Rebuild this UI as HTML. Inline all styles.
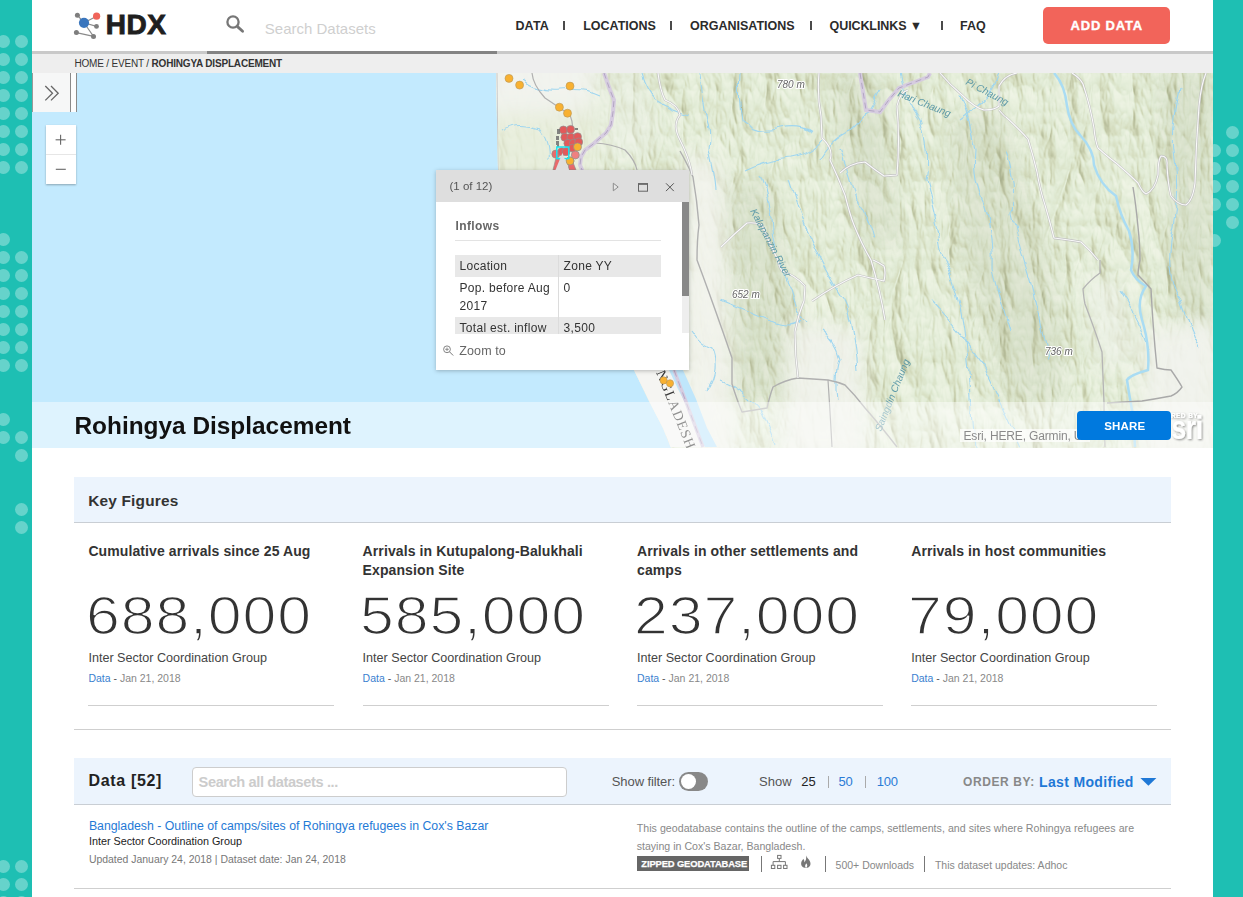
<!DOCTYPE html>
<html><head><meta charset="utf-8"><style>
html,body{margin:0;padding:0}
body{width:1243px;height:897px;overflow:hidden;position:relative;background:#1ebfb3;font-family:"Liberation Sans", sans-serif}
.d i{position:absolute;width:13px;height:13px;border-radius:50%;background:rgba(255,255,255,0.32)}
.r{position:absolute}
.t{position:absolute;white-space:nowrap}
svg{display:block}
</style></head><body>
<div class="d"><i style="left:-2.9px;top:35.3px"></i><i style="left:15.1px;top:35.3px"></i><i style="left:-2.9px;top:53.3px"></i><i style="left:15.1px;top:53.3px"></i><i style="left:-2.9px;top:71.3px"></i><i style="left:15.1px;top:71.3px"></i><i style="left:-2.9px;top:89.3px"></i><i style="left:15.1px;top:89.3px"></i><i style="left:-2.9px;top:107.3px"></i><i style="left:15.1px;top:107.3px"></i><i style="left:-2.9px;top:125.3px"></i><i style="left:15.1px;top:125.3px"></i><i style="left:-2.9px;top:143.3px"></i><i style="left:15.1px;top:143.3px"></i><i style="left:-2.9px;top:161.3px"></i><i style="left:15.1px;top:161.3px"></i><i style="left:-2.9px;top:233.3px"></i><i style="left:-2.9px;top:251.3px"></i><i style="left:15.1px;top:251.3px"></i><i style="left:-2.9px;top:269.3px"></i><i style="left:15.1px;top:269.3px"></i><i style="left:-2.9px;top:287.3px"></i><i style="left:15.1px;top:287.3px"></i><i style="left:-2.9px;top:305.3px"></i><i style="left:15.1px;top:305.3px"></i><i style="left:-2.9px;top:323.3px"></i><i style="left:15.1px;top:323.3px"></i><i style="left:-2.9px;top:341.3px"></i><i style="left:15.1px;top:341.3px"></i><i style="left:-2.9px;top:359.3px"></i><i style="left:15.1px;top:359.3px"></i><i style="left:-2.9px;top:413.3px"></i><i style="left:-2.9px;top:431.3px"></i><i style="left:15.1px;top:431.3px"></i><i style="left:15.1px;top:449.3px"></i><i style="left:15.1px;top:503.3px"></i><i style="left:15.1px;top:521.3px"></i><i style="left:-2.9px;top:860.3px"></i><i style="left:15.1px;top:860.3px"></i><i style="left:-2.9px;top:878.3px"></i><i style="left:15.1px;top:878.3px"></i><i style="left:-2.9px;top:896.3px"></i><i style="left:15.1px;top:896.3px"></i><i style="left:1225.7px;top:125.7px"></i><i style="left:1207.7px;top:143.7px"></i><i style="left:1225.7px;top:143.7px"></i><i style="left:1207.7px;top:161.7px"></i><i style="left:1225.7px;top:161.7px"></i><i style="left:1207.7px;top:179.7px"></i><i style="left:1225.7px;top:179.7px"></i><i style="left:1207.7px;top:197.7px"></i><i style="left:1225.7px;top:197.7px"></i><i style="left:1225.7px;top:215.7px"></i><i style="left:1207.7px;top:233.7px"></i></div>
<div class="r" style="left:32px;top:0;width:1181px;height:897px;background:#fff"></div>
<div class="r" style="left:32px;top:0px;width:1181px;height:51px;background:#fff"></div><div class="r" style="left:32px;top:51px;width:1181px;height:3px;background:#c9c9c9"></div><div class="r" style="left:207px;top:51px;width:290px;height:3px;background:#838383"></div><div class="r" style="left:32px;top:54px;width:1181px;height:19px;background:#eeeeee"></div><div class="t" style="left:105.8px;top:11.2px;font-size:28px;line-height:28px;font-weight:bold;color:#1f1f1f;letter-spacing:0.5px;-webkit-text-stroke:0.9px #1f1f1f">HDX</div><div class="t" style="left:264.8px;top:20.8px;font-size:15px;line-height:15px;color:#cfcfcf">Search Datasets</div><div class="t" style="left:515.4px;top:19.9px;font-size:12.5px;line-height:12.5px;font-weight:bold;color:#2b2b2b;letter-spacing:0px;letter-spacing:0.2px">DATA</div><div class="t" style="left:583.2px;top:19.9px;font-size:12.5px;line-height:12.5px;font-weight:bold;color:#2b2b2b;letter-spacing:0px">LOCATIONS</div><div class="t" style="left:690.0px;top:19.9px;font-size:12.5px;line-height:12.5px;font-weight:bold;color:#2b2b2b;letter-spacing:0px">ORGANISATIONS</div><div class="t" style="left:829.6px;top:19.9px;font-size:12.5px;line-height:12.5px;font-weight:bold;color:#2b2b2b;letter-spacing:0px;letter-spacing:-0.1px">QUICKLINKS ▼</div><div class="t" style="left:960.0px;top:19.9px;font-size:12.5px;line-height:12.5px;font-weight:bold;color:#2b2b2b;letter-spacing:0px">FAQ</div><div class="r" style="left:563px;top:21px;width:2px;height:9px;background:#4a4a4a"></div><div class="r" style="left:670px;top:21px;width:2px;height:9px;background:#4a4a4a"></div><div class="r" style="left:810px;top:21px;width:2px;height:9px;background:#4a4a4a"></div><div class="r" style="left:941px;top:21px;width:2px;height:9px;background:#4a4a4a"></div><div class="r" style="left:1043px;top:7px;width:127px;height:37px;background:#f2645a;border-radius:5px"></div><div class="t" style="left:1070.6px;top:19.0px;font-size:13px;line-height:13px;font-weight:bold;color:#fff;letter-spacing:0.8px;-webkit-text-stroke:0.35px #fff">ADD DATA</div><div class="t" style="left:74.4px;top:58.5px;font-size:10px;line-height:10px;color:#333;letter-spacing:-0.18px">HOME / EVENT / <b>ROHINGYA DISPLACEMENT</b></div><div class="r" style="left:32px;top:73px;width:1181px;height:375px;overflow:hidden"><svg width="1181" height="375" viewBox="32 73 1181 375">
<defs>
<filter id="terr" x="0" y="0" width="1" height="1" color-interpolation-filters="sRGB">
<feTurbulence type="turbulence" baseFrequency="0.03 0.011" numOctaves="4" seed="11" result="n"/>
<feDiffuseLighting in="n" surfaceScale="4.2" diffuseConstant="1.02" lighting-color="#fff" result="l"><feDistantLight azimuth="300" elevation="60"/></feDiffuseLighting>
<feComponentTransfer>
<feFuncR type="table" tableValues=".549 .588 .627 .659 .69 .765 .84 .885 .94"/>
<feFuncG type="table" tableValues=".573 .612 .651 .682 .715 .79 .87 .925 .96"/>
<feFuncB type="table" tableValues=".44 .47 .5 .54 .58 .66 .755 .84 .9"/>
</feComponentTransfer>
</filter>
<filter id="wig" x="-5%" y="-5%" width="110%" height="110%">
<feTurbulence type="fractalNoise" baseFrequency="0.05" numOctaves="2" seed="4" result="w"/>
<feDisplacementMap in="SourceGraphic" in2="w" scale="10" xChannelSelector="R" yChannelSelector="G"/>
</filter>
<filter id="bl" x="-50%" y="-50%" width="200%" height="200%"><feGaussianBlur stdDeviation="10"/></filter>
<clipPath id="land"><path d="M496,73 L498,170 L506,250 L634,370 L649,401 L663,428 L671,448 L1213,448 L1213,73 Z"/></clipPath>
</defs>
<rect x="32" y="73" width="1181" height="375" fill="#c3eafe"/>
<g clip-path="url(#land)">
<rect x="400" y="73" width="813" height="374" fill="#f1f2ec"/>
<rect x="480" y="73" width="733" height="375" fill="#e4ecd5" filter="url(#terr)"/>
<g filter="url(#bl)" fill="#7d8560" opacity="0.10">
<path d="M722,190 L770,180 L795,300 L790,400 L735,400 Z"/>
<path d="M950,120 L1000,110 L1060,300 L1065,400 L1010,400 L960,250 Z"/>
<path d="M1160,73 L1213,73 L1213,330 L1175,320 Z"/>
<path d="M830,73 L880,73 L900,250 L860,240 Z"/>
</g>
<g filter="url(#bl)" fill="#f2f3ee">
<path d="M470,50 L600,50 L590,115 L540,120 L480,125 Z" opacity="0.97"/>
<path d="M480,110 L600,110 L590,250 L480,250 Z" fill="#e8eedc" opacity="0.75"/>
<path d="M686,150 L722,165 L728,300 L738,460 L680,460 Z" opacity="0.92"/>
<path d="M790,320 L860,330 L870,460 L780,460 Z" opacity="0.85"/>
<path d="M1145,330 L1220,320 L1220,460 L1140,460 Z" opacity="0.9"/>
<path d="M1085,280 L1120,280 L1135,360 L1100,370 Z" opacity="0.6"/>
<path d="M600,60 L640,60 L660,140 L630,170 L600,150 Z" opacity="0.35"/>
</g>
<path d="M620,360 L675,360 L678,389 L688,408 L700,437 L705,447 L660,447 Z" fill="#f5f5f2"/>
<!-- rivers thin -->
<g fill="none" stroke="#9fd6f0" stroke-width="1.1" filter="url(#wig)">
<path d="M500,130 Q520,120 540,128 Q550,140 548,160"/>
<path d="M525,80 Q540,92 560,90 Q585,88 600,95"/>
<path d="M640,73 Q645,90 655,100 Q670,110 690,115"/>
<path d="M700,73 Q702,95 705,110 Q712,130 709,150 Q715,175 716,190"/>
<path d="M740,73 Q738,100 742,120 Q760,135 780,128 Q800,124 812,132"/>
<path d="M745,170 Q765,160 790,158 Q810,155 822,140"/>
<path d="M760,175 Q770,200 772,230 Q775,260 790,290 Q795,310 805,322"/>
<path d="M790,180 Q800,215 812,240 Q825,270 845,300 Q855,330 858,370"/>
<path d="M840,150 Q850,175 856,200 Q870,220 874,240"/>
<path d="M880,90 Q870,115 852,130 Q830,140 820,160"/>
<path d="M900,73 Q905,100 920,120 Q930,150 925,180 Q935,215 940,250 Q960,290 965,330 Q970,380 975,447"/>
<path d="M960,95 Q970,120 975,150 Q972,180 985,205 Q995,240 993,270 Q1000,300 1010,330"/>
<path d="M1005,150 Q1015,180 1012,215 Q1020,250 1030,280 Q1040,320 1048,360"/>
<path d="M1180,90 Q1170,130 1175,160 Q1180,200 1170,240 Q1165,280 1180,300 Q1190,330 1200,350"/>
<path d="M1120,290 Q1140,320 1150,350"/>
<path d="M1000,73 Q990,100 960,120"/>
<path d="M930,300 Q950,320 980,360 Q1000,400 1020,447"/>
<path d="M720,300 Q745,310 770,320 Q790,330 800,320"/>
<path d="M690,330 Q700,345 712,350 Q720,370 708,390"/>
<path d="M720,380 Q745,390 760,410 Q770,430 775,447"/>
<path d="M820,330 Q835,340 840,360 Q835,380 838,400"/>
</g>
<!-- big river NE -->
<path d="M1054,73 Q1065,85 1067,106 Q1070,125 1080,135 Q1094,150 1094,165 Q1100,185 1116,196 Q1120,215 1129,231 Q1135,250 1131,270 Q1135,280 1146,286 Q1136,300 1142,320 Q1150,345 1148,370 Q1130,375 1127,380 Q1130,400 1133,415 Q1134,430 1135,447" fill="none" stroke="#a9dcf3" stroke-width="2.5"/>
<!-- roads -->
<g fill="none" stroke="#c2c2c2" stroke-width="2.3" stroke-linejoin="round">
<path id="rd1" d="M819,73 Q817,95 821,116 L822,138 Q834,149 830,160 Q838,177 845,195 Q850,215 854,225 Q862,245 871,260 Q880,290 885,320"/>
<path id="rd2" d="M840,173 Q850,163 865,162 Q875,170 884,176 L897,175 Q900,140 897,106 Q900,92 908,90"/>
<path id="rd3" d="M940,73 Q950,85 962,95 Q975,108 984,110 Q995,110 999,106 L999,86 Q1005,75 1017,73"/>
<path id="rd4" d="M999,110 Q1005,117 1006,117 Q1020,130 1028,139 Q1033,155 1037,172 Q1040,190 1045,205 Q1050,222 1054,238 Q1070,240 1081,242 Q1090,250 1098,260"/>
<path id="rd5" d="M1072,73 Q1080,78 1083,84 Q1090,105 1094,128 Q1095,140 1098,148 Q1108,157 1116,163 Q1130,175 1138,183 Q1142,192 1146,194 Q1155,190 1158,175 Q1158,160 1161,156 Q1168,156 1167,165 Q1168,185 1171,196 Q1178,205 1186,205 Q1193,200 1195,183 Q1196,145 1199,106 Q1201,85 1206,73"/>
<path id="rd6" stroke="#a9a9a9" stroke-width="1.4" d="M1133,187 Q1136,205 1138,227 Q1140,245 1140,260 Q1138,270 1138,275 Q1145,282 1151,289 Q1153,330 1157,368 Q1165,370 1171,370 Q1178,380 1182,387 Q1178,393 1171,396 Q1155,399 1142,401 Q1125,402 1107,403"/>
<path id="rd7" stroke="#b5b5b5" stroke-width="1.3" d="M1100,260 Q1100,268 1100,273 Q1090,280 1083,289 Q1084,300 1085,304 Q1095,330 1102,352 Q1103,380 1104,403 Q1104,420 1105,447"/>
<path id="rd8" stroke="#b0b0b0" stroke-width="1.4" d="M680,151 Q688,165 693,177 Q697,200 699,225 Q697,240 697,260 Q712,300 732,358 L732,384 Q737,400 742,412 Q755,410 767,408 Q770,395 773,387 Q785,380 798,378 Q812,379 828,380 Q838,382 845,385 Q855,395 865,408 Q880,425 897,447"/>
<path id="rd9" d="M798,378 Q795,355 795,332 Q798,315 804,301 L805,286 Q795,275 782,271 Q778,265 778,260 Q770,245 762,225 Q755,222 747,223 Q733,235 721,247"/>
<path id="rd10" d="M812,301 Q835,285 858,275 Q870,278 884,281 Q886,272 884,266 Q878,262 873,260"/>
</g>
<g fill="none" stroke="#b0b0b0" stroke-width="1.2" stroke-linejoin="round">
<path d="M828,380 Q830,410 832,447"/>
<path d="M532,73 Q533,85 545,98 Q560,108 570,115 Q574,125 572,132"/>
<path d="M595,143 Q612,144 625,150 Q635,160 637,170"/>
</g>
<g fill="none" stroke="#c4c4c4" stroke-width="2.3"><path id="rd11" d="M658,73 Q660,90 665,100 Q678,105 680,115 Q672,125 680,140 Q690,160 692,175"/></g>
<g fill="none" stroke="#fafafa" stroke-width="1.1" stroke-linejoin="round">
<use href="#rd1"/><use href="#rd2"/><use href="#rd3"/><use href="#rd4"/><use href="#rd5"/><use href="#rd9"/><use href="#rd10"/><use href="#rd11"/>
</g>
<!-- coastline outline -->
<path d="M497,73 L498,170 L506,250" fill="none" stroke="#c9c9c9" stroke-width="1"/>
</g>
<!-- Naf river -->
<path d="M669,370 L683,370 L696,399 L707,428 L717,447 L705,447 L700,437 L688,408 L678,389 Z" fill="#bfe6fb"/>
<path d="M674,370 L703,447" stroke="#d6cce0" stroke-width="3.5" fill="none"/>
<path d="M674,370 L703,447" stroke="#b6a9c6" stroke-width="1" stroke-dasharray="7 5" fill="none"/>
<!-- border purple dashed top -->
<path d="M604,73 L610,90 L614,100 L613,112 L611,125 L606,133 L600,138 L592,145 L585,150 L581,157 L580,165 L583,172" stroke="#d6cce0" stroke-width="4" fill="none"/>
<path d="M604,73 L610,90 L614,100 L613,112 L611,125 L606,133 L600,138 L592,145 L585,150 L581,157 L580,165 L583,172" stroke="#b3a6c3" stroke-width="1" stroke-dasharray="6 4" fill="none"/>
<path d="M860,73 L866,110 L880,112 L888,101 L899,88 L928,77 L930,73" stroke="#d6cce0" stroke-width="4" fill="none"/>
<path d="M860,73 L866,110 L880,112 L888,101 L899,88 L928,77 L930,73" stroke="#b3a6c3" stroke-width="1" stroke-dasharray="6 4" fill="none"/>
<!-- labels -->
<g font-family="Liberation Sans" font-style="italic" font-size="10" fill="#666">
<text x="777" y="88" stroke="#fff" stroke-width="2" paint-order="stroke">780 m</text>
<text x="732" y="298" stroke="#fff" stroke-width="2" paint-order="stroke">652 m</text>
<text x="1045" y="355" stroke="#fff" stroke-width="2" paint-order="stroke">736 m</text>
</g>
<g font-family="Liberation Sans" font-style="italic" font-size="10" fill="#5e9aa8">
<text transform="translate(897,96) rotate(22)">Hari Chaung</text>
<text transform="translate(965,84) rotate(28)">Pi Chaung</text>
<text transform="translate(750,211) rotate(62)">Kalapanzin River</text>
<text transform="translate(881,432) rotate(-68)">Saingdin Chaung</text>
</g>
<text transform="translate(656,372.5) rotate(68)" font-family="Liberation Serif" font-size="14" fill="#383838" letter-spacing="1.1">NGLADESH</text>
<!-- markers -->
<g fill="#f8b131" stroke="#b7955a" stroke-width="0.6">
<circle cx="509" cy="78.4" r="4"/><circle cx="519.6" cy="85.1" r="4"/><circle cx="570" cy="86.1" r="4"/>
<circle cx="559.4" cy="107.2" r="4"/><circle cx="567.5" cy="113.2" r="4"/><circle cx="570" cy="160.9" r="4"/>
<circle cx="663.6" cy="380.4" r="3.6"/><circle cx="670" cy="383.3" r="3.6"/>
</g>
<g stroke="#8f8f8f" stroke-width="0.7">
<g fill="#e25a5a">
<circle cx="563.4" cy="130" r="4"/><circle cx="570.6" cy="129.4" r="4"/>
<circle cx="564.9" cy="137.3" r="4"/><circle cx="570.9" cy="137.3" r="4"/><circle cx="577.5" cy="136.7" r="4"/>
<circle cx="567.9" cy="143.3" r="4"/><circle cx="573.3" cy="143.3" r="4"/><circle cx="578.7" cy="142" r="4"/>
<circle cx="572.7" cy="148.1" r="4"/><circle cx="575.3" cy="155" r="4" fill="#ef8080"/>
<circle cx="555.8" cy="154.1" r="4" fill="#ea6a6a"/><circle cx="561.8" cy="151.7" r="4"/><circle cx="566" cy="151.7" r="4"/>
<path d="M556,158 L562,160 L558,170 L553,170 Z" fill="#ea6a6a"/><path d="M567,158 L572,160 L576,170 L569,170 Z" fill="#ea6a6a"/>
</g>
<circle cx="577.5" cy="146.9" r="4" fill="#f8b131"/><circle cx="570" cy="161" r="4" fill="#f8b131"/>
</g>
<g fill="#707070" opacity="0.85"><rect x="557" y="129" width="3" height="5"/><rect x="556" y="136" width="3" height="4"/><rect x="556" y="141" width="3" height="4"/><rect x="557" y="145" width="2" height="2"/><rect x="575" y="128" width="3" height="2"/></g>
<rect x="556.8" y="147" width="12" height="11.6" fill="none" stroke="#17e4f0" stroke-width="1.5"/>
</svg>
</div><div class="r" style="left:32px;top:402px;width:1181px;height:46px;background:rgba(255,255,255,0.45)"></div><div class="t" style="left:74.5px;top:414.0px;font-size:24.4px;line-height:24.4px;font-weight:bold;color:#111">Rohingya Displacement</div><div class="r" style="left:32px;top:73px;width:45px;height:39px;background:#f6f7f7"></div><div class="r" style="left:71px;top:73px;width:5px;height:39px;background:#fdfdfd"></div><div class="r" style="left:32px;top:73px;width:1px;height:39px;background:#999"></div><div class="r" style="left:70px;top:73px;width:1.3px;height:39px;background:#8a8a8a"></div><div class="r" style="left:75.8px;top:73px;width:1.3px;height:39px;background:#8a8a8a"></div><div class="r" style="left:46px;top:125px;width:30px;height:59px;background:#fff;box-shadow:0 1px 2px rgba(0,0,0,0.3)"></div><div class="r" style="left:46px;top:154px;width:30px;height:1px;background:#e6e6e6"></div><div class="r" style="left:436px;top:170px;width:253px;height:200px;background:#fff;box-shadow:0 1px 4px rgba(0,0,0,0.25)"></div><div class="r" style="left:436px;top:170px;width:253px;height:31.5px;background:#dedede"></div><div class="t" style="left:449.5px;top:180.5px;font-size:11.5px;line-height:11.5px;color:#555">(1 of 12)</div><div class="t" style="left:455.5px;top:220.0px;font-size:12px;line-height:12px;font-weight:bold;color:#666;letter-spacing:0.4px">Inflows</div><div class="r" style="left:455px;top:240px;width:206px;height:1px;background:#e3e3e3"></div><div class="r" style="left:455px;top:255px;width:206px;height:21.5px;background:#e8e8e8"></div><div class="r" style="left:455px;top:317.3px;width:206px;height:16.3px;background:#e8e8e8"></div><div class="r" style="left:557.5px;top:255px;width:1px;height:78.6px;background:#dcdcdc"></div><div class="t" style="left:459.5px;top:259.8px;font-size:12px;line-height:12px;color:#333;letter-spacing:0.3px">Location</div><div class="t" style="left:563.6px;top:259.8px;font-size:12px;line-height:12px;color:#333;letter-spacing:0.3px">Zone YY</div><div class="t" style="left:459.5px;top:281.9px;font-size:12px;line-height:12px;color:#333;letter-spacing:0.3px">Pop. before Aug</div><div class="t" style="left:459.5px;top:299.8px;font-size:12px;line-height:12px;color:#333;letter-spacing:0.3px">2017</div><div class="t" style="left:563.6px;top:281.9px;font-size:12px;line-height:12px;color:#333;letter-spacing:0.3px">0</div><div class="r" style="left:455px;top:317px;width:206px;height:16.6px;overflow:hidden"><div class="t" style="left:4.5px;top:4.5px;font-size:12px;line-height:12px;color:#333;letter-spacing:0.3px">Total est. inflow</div><div class="t" style="left:108.6px;top:4.5px;font-size:12px;line-height:12px;color:#333;letter-spacing:0.3px">3,500</div></div><div class="r" style="left:682.3px;top:202px;width:6.7px;height:131px;background:#eeeeee"></div><div class="r" style="left:682.3px;top:202px;width:6.7px;height:94px;background:#888"></div><div class="t" style="left:459.3px;top:345.1px;font-size:12.5px;line-height:12.5px;color:#666;letter-spacing:0.1px">Zoom to</div><div class="r" style="left:960px;top:429px;width:130px;height:13px;background:rgba(255,255,255,0.7)"></div><div class="t" style="left:963.5px;top:429.8px;font-size:12px;line-height:12px;color:#8a8a8a;letter-spacing:-0.15px">Esri, HERE, Garmin, USGS</div><div class="r" style="left:1077px;top:411px;width:94px;height:29px;background:#0079de;border-radius:4px"></div><div class="t" style="left:1104.2px;top:421.3px;font-size:11.5px;line-height:11.5px;font-weight:bold;color:#fff;letter-spacing:0.2px">SHARE</div><div class="r" style="left:74px;top:477px;width:1097px;height:45px;background:#ecf4fd;border-bottom:1px solid #c9ced4"></div><div class="t" style="left:88.2px;top:492.5px;font-size:15.4px;line-height:15.4px;font-weight:bold;color:#333;letter-spacing:0.2px">Key Figures</div><div class="t" style="left:88.4px;top:544.4px;font-size:14px;line-height:14px;font-weight:bold;color:#333;letter-spacing:0.1px">Cumulative arrivals since 25 Aug</div><div class="t" style="left:85.6px;top:588.9px;font-size:54.5px;line-height:54.5px;color:#333;letter-spacing:0.8px;-webkit-text-stroke:1.5px #fff;transform:scaleX(1.115);transform-origin:0 0">688,000</div><div class="t" style="left:88.4px;top:652.2px;font-size:12.6px;line-height:12.6px;color:#444">Inter Sector Coordination Group</div><div class="t" style="left:88.4px;top:672.8px;font-size:10.5px;line-height:10.5px;color:#555"><span style="color:#3a7fd0">Data</span> - <span style="color:#888">Jan 21, 2018</span></div><div class="r" style="left:88.4px;top:705px;width:246px;height:1px;background:#cfcfcf"></div><div class="t" style="left:362.6px;top:544.4px;font-size:14px;line-height:14px;font-weight:bold;color:#333;letter-spacing:0.1px">Arrivals in Kutupalong-Balukhali</div><div class="t" style="left:362.6px;top:562.6px;font-size:14px;line-height:14px;font-weight:bold;color:#333;letter-spacing:0.1px">Expansion Site</div><div class="t" style="left:359.8px;top:588.9px;font-size:54.5px;line-height:54.5px;color:#333;letter-spacing:0.8px;-webkit-text-stroke:1.5px #fff;transform:scaleX(1.115);transform-origin:0 0">585,000</div><div class="t" style="left:362.6px;top:652.2px;font-size:12.6px;line-height:12.6px;color:#444">Inter Sector Coordination Group</div><div class="t" style="left:362.6px;top:672.8px;font-size:10.5px;line-height:10.5px;color:#555"><span style="color:#3a7fd0">Data</span> - <span style="color:#888">Jan 21, 2018</span></div><div class="r" style="left:362.6px;top:705px;width:246px;height:1px;background:#cfcfcf"></div><div class="t" style="left:637.0px;top:544.4px;font-size:14px;line-height:14px;font-weight:bold;color:#333;letter-spacing:0.1px">Arrivals in other settlements and</div><div class="t" style="left:637.0px;top:562.6px;font-size:14px;line-height:14px;font-weight:bold;color:#333;letter-spacing:0.1px">camps</div><div class="t" style="left:634.2px;top:588.9px;font-size:54.5px;line-height:54.5px;color:#333;letter-spacing:0.8px;-webkit-text-stroke:1.5px #fff;transform:scaleX(1.115);transform-origin:0 0">237,000</div><div class="t" style="left:637.0px;top:652.2px;font-size:12.6px;line-height:12.6px;color:#444">Inter Sector Coordination Group</div><div class="t" style="left:637.0px;top:672.8px;font-size:10.5px;line-height:10.5px;color:#555"><span style="color:#3a7fd0">Data</span> - <span style="color:#888">Jan 21, 2018</span></div><div class="r" style="left:637px;top:705px;width:246px;height:1px;background:#cfcfcf"></div><div class="t" style="left:911.2px;top:544.4px;font-size:14px;line-height:14px;font-weight:bold;color:#333;letter-spacing:0.1px">Arrivals in host communities</div><div class="t" style="left:908.4px;top:588.9px;font-size:54.5px;line-height:54.5px;color:#333;letter-spacing:0.8px;-webkit-text-stroke:1.5px #fff;transform:scaleX(1.115);transform-origin:0 0">79,000</div><div class="t" style="left:911.2px;top:652.2px;font-size:12.6px;line-height:12.6px;color:#444">Inter Sector Coordination Group</div><div class="t" style="left:911.2px;top:672.8px;font-size:10.5px;line-height:10.5px;color:#555"><span style="color:#3a7fd0">Data</span> - <span style="color:#888">Jan 21, 2018</span></div><div class="r" style="left:911.2px;top:705px;width:246px;height:1px;background:#cfcfcf"></div><div class="r" style="left:74px;top:729px;width:1097px;height:1px;background:#cfcfcf"></div><div class="r" style="left:74px;top:758px;width:1097px;height:46px;background:#ecf4fd;border-bottom:1px solid #c9ced4"></div><div class="t" style="left:88.6px;top:772.8px;font-size:16px;line-height:16px;font-weight:bold;color:#222;letter-spacing:0.65px">Data [52]</div><div class="r" style="left:192px;top:767px;width:375px;height:30px;background:#fff;border:1px solid #cdcdcd;border-radius:4px;box-sizing:border-box"></div><div class="t" style="left:198.6px;top:774.6px;font-size:14.6px;line-height:14.6px;font-weight:bold;color:#cccccc;letter-spacing:-0.4px">Search all datasets ...</div><div class="t" style="left:611.8px;top:775.3px;font-size:13px;line-height:13px;color:#555;letter-spacing:-0.1px">Show filter:</div><div class="r" style="left:679px;top:772px;width:29px;height:19px;background:#888;border-radius:10px"></div><div class="r" style="left:681px;top:774px;width:15px;height:15px;background:#fff;border-radius:50%"></div><div class="t" style="left:759.0px;top:775.3px;font-size:13px;line-height:13px;color:#555">Show</div><div class="t" style="left:801.3px;top:775.3px;font-size:13px;line-height:13px;color:#222">25</div><div class="t" style="left:838.4px;top:775.3px;font-size:13px;line-height:13px;color:#2a7bd6">50</div><div class="t" style="left:876.8px;top:775.3px;font-size:13px;line-height:13px;color:#2a7bd6;letter-spacing:-0.3px">100</div><div class="r" style="left:827.6px;top:776px;width:1.2px;height:12px;background:#aaa"></div><div class="r" style="left:864.8px;top:776px;width:1.2px;height:12px;background:#aaa"></div><div class="t" style="left:963.0px;top:776.2px;font-size:12px;line-height:12px;font-weight:bold;color:#888;letter-spacing:0.6px">ORDER BY:</div><div class="t" style="left:1039.0px;top:774.5px;font-size:14px;line-height:14px;font-weight:bold;color:#1f78d6;letter-spacing:0.35px">Last Modified</div><div class="t" style="left:88.9px;top:819.6px;font-size:12.3px;line-height:12.3px;color:#1f7ad6">Bangladesh - Outline of camps/sites of Rohingya refugees in Cox's Bazar</div><div class="t" style="left:88.9px;top:835.9px;font-size:10.8px;line-height:10.8px;color:#222">Inter Sector Coordination Group</div><div class="t" style="left:88.9px;top:855.0px;font-size:10.45px;line-height:10.45px;color:#777">Updated January 24, 2018 | Dataset date: Jan 24, 2018</div><div class="t" style="left:636.7px;top:823.3px;font-size:10.6px;line-height:10.6px;color:#888;letter-spacing:0.05px">This geodatabase contains the outline of the camps, settlements, and sites where Rohingya refugees are</div><div class="t" style="left:636.7px;top:840.9px;font-size:10.6px;line-height:10.6px;color:#888">staying in Cox's Bazar, Bangladesh.</div><div class="r" style="left:637px;top:856px;width:112px;height:14.6px;background:#666"></div><div class="t" style="left:641.3px;top:859.3px;font-size:9.4px;line-height:9.4px;font-weight:bold;color:#fff;letter-spacing:-0.12px;-webkit-text-stroke:0.25px #fff">ZIPPED GEODATABASE</div><div class="r" style="left:760.8px;top:855.5px;width:1px;height:16px;background:#777"></div><div class="r" style="left:824.5px;top:855.5px;width:1px;height:16px;background:#777"></div><div class="r" style="left:923.8px;top:855.5px;width:1px;height:16px;background:#777"></div><div class="t" style="left:835.6px;top:859.5px;font-size:10.5px;line-height:10.5px;color:#888">500+ Downloads</div><div class="t" style="left:934.9px;top:859.5px;font-size:10.5px;line-height:10.5px;color:#888">This dataset updates: Adhoc</div><div class="r" style="left:74px;top:888px;width:1097px;height:1px;background:#cfcfcf"></div>
<svg class="r" style="left:0;top:0" width="1243" height="897" viewBox="0 0 1243 897">
<g stroke="#8a8a8a" stroke-width="1.1">
<line x1="84" y1="22.8" x2="77.4" y2="15.2"/><line x1="84" y1="22.8" x2="96.6" y2="16.2"/>
<line x1="84" y1="22.8" x2="96.5" y2="26.4"/><line x1="84" y1="22.8" x2="93.5" y2="36.4"/>
<line x1="76.4" y1="32.6" x2="93.5" y2="36.4"/></g>
<circle cx="77.4" cy="15.2" r="2.5" fill="#7e7e7e"/><circle cx="96.6" cy="16.2" r="3.6" fill="#f0645a"/>
<circle cx="84" cy="22.8" r="5.1" fill="#3a76bd"/><circle cx="96.5" cy="26.4" r="2.4" fill="#7e7e7e"/>
<circle cx="76.4" cy="32.6" r="2.5" fill="#7e7e7e"/><circle cx="93.5" cy="36.4" r="2.5" fill="#7e7e7e"/>
<!-- search icon -->
<circle cx="233" cy="22" r="5.6" fill="none" stroke="#777" stroke-width="2.3"/>
<line x1="237.5" y1="26.6" x2="242.6" y2="31.3" stroke="#777" stroke-width="2.8" stroke-linecap="round"/>
<!-- sidebar chevrons -->
<g fill="none" stroke="#666" stroke-width="1.3">
<path d="M45.3,86 L52.5,93.2 L45.3,100.4"/><path d="M51,86 L58.2,93.2 L51,100.4"/>
</g>
<!-- zoom +/- -->
<g stroke="#666" stroke-width="1.1">
<line x1="55.6" y1="139.8" x2="65.6" y2="139.8"/><line x1="60.6" y1="134.8" x2="60.6" y2="144.8"/>
<line x1="55.8" y1="169.3" x2="65.8" y2="169.3"/>
</g>
<!-- popup pointer -->
<path d="M555.5,170 L562.4,153 L569,170 Z" fill="#dedede"/>
<!-- popup icons -->
<path d="M613.3,183.2 L618.2,187 L613.3,190.8 Z" fill="#e6e6e6" stroke="#8c8c8c" stroke-width="1"/>
<rect x="638.5" y="183.8" width="9" height="7.4" fill="none" stroke="#666" stroke-width="1"/>
<line x1="638" y1="184" x2="648" y2="184" stroke="#666" stroke-width="1.6"/>
<g stroke="#555" stroke-width="1"><line x1="666" y1="183.3" x2="673.8" y2="191.1"/><line x1="673.8" y1="183.3" x2="666" y2="191.1"/></g>
<!-- zoom to icon -->
<circle cx="447" cy="349.3" r="3.4" fill="none" stroke="#777" stroke-width="0.9"/>
<line x1="449.5" y1="351.8" x2="453.2" y2="355.5" stroke="#777" stroke-width="1"/>
<line x1="445.2" y1="349.3" x2="448.8" y2="349.3" stroke="#777" stroke-width="0.8"/>
<line x1="447" y1="347.5" x2="447" y2="351.1" stroke="#777" stroke-width="0.8"/>
<!-- esri logo -->
<defs><filter id="shd" x="-30%" y="-30%" width="160%" height="160%"><feGaussianBlur in="SourceAlpha" stdDeviation="1.2"/><feOffset dx="0.5" dy="0.5"/><feComponentTransfer><feFuncA type="linear" slope="0.45"/></feComponentTransfer><feMerge><feMergeNode/><feMergeNode in="SourceGraphic"/></feMerge></filter></defs>
<g filter="url(#shd)" fill="#fff" font-family="Liberation Sans" font-weight="bold">
<text transform="translate(1171.5,438.7) scale(0.8,1)" font-size="33" letter-spacing="-0.5">sri</text>
<text x="1171" y="418" font-size="6.5" letter-spacing="0.4">RED BY</text>
</g>
<!-- order by triangle -->
<path d="M1140.4,778 L1156.4,778 L1148.4,785.8 Z" fill="#1f78d6"/>
<!-- sitemap icon -->
<g fill="none" stroke="#777" stroke-width="1">
<rect x="777.6" y="855.4" width="3.4" height="3"/>
<path d="M779.3,858.4 V861.6 M773.1,865.2 V861.6 H785.4 V865.2"/>
<rect x="771.4" y="865.3" width="3.4" height="3.2"/><rect x="777.6" y="865.3" width="3.4" height="3.2"/><rect x="783.6" y="865.3" width="3.4" height="3.2"/>
</g>
<!-- flame -->
<path d="M806,855.6 C806.8,858 809,859 810,861.5 C811.5,865 809.5,868 806,868 C802.5,868 800.5,865.5 801.3,862.3 C801.8,860.5 803,860 803.2,858.8 C804.3,860 804.5,861 804.2,862.5 C805.5,861 806.8,859 806,855.6 Z M806,868 C807.5,866.5 807.8,864.8 806.2,863.2 C805.8,864.8 804.2,865.5 806,868 Z" fill="#777" fill-rule="evenodd"/>
</svg>

</body></html>
